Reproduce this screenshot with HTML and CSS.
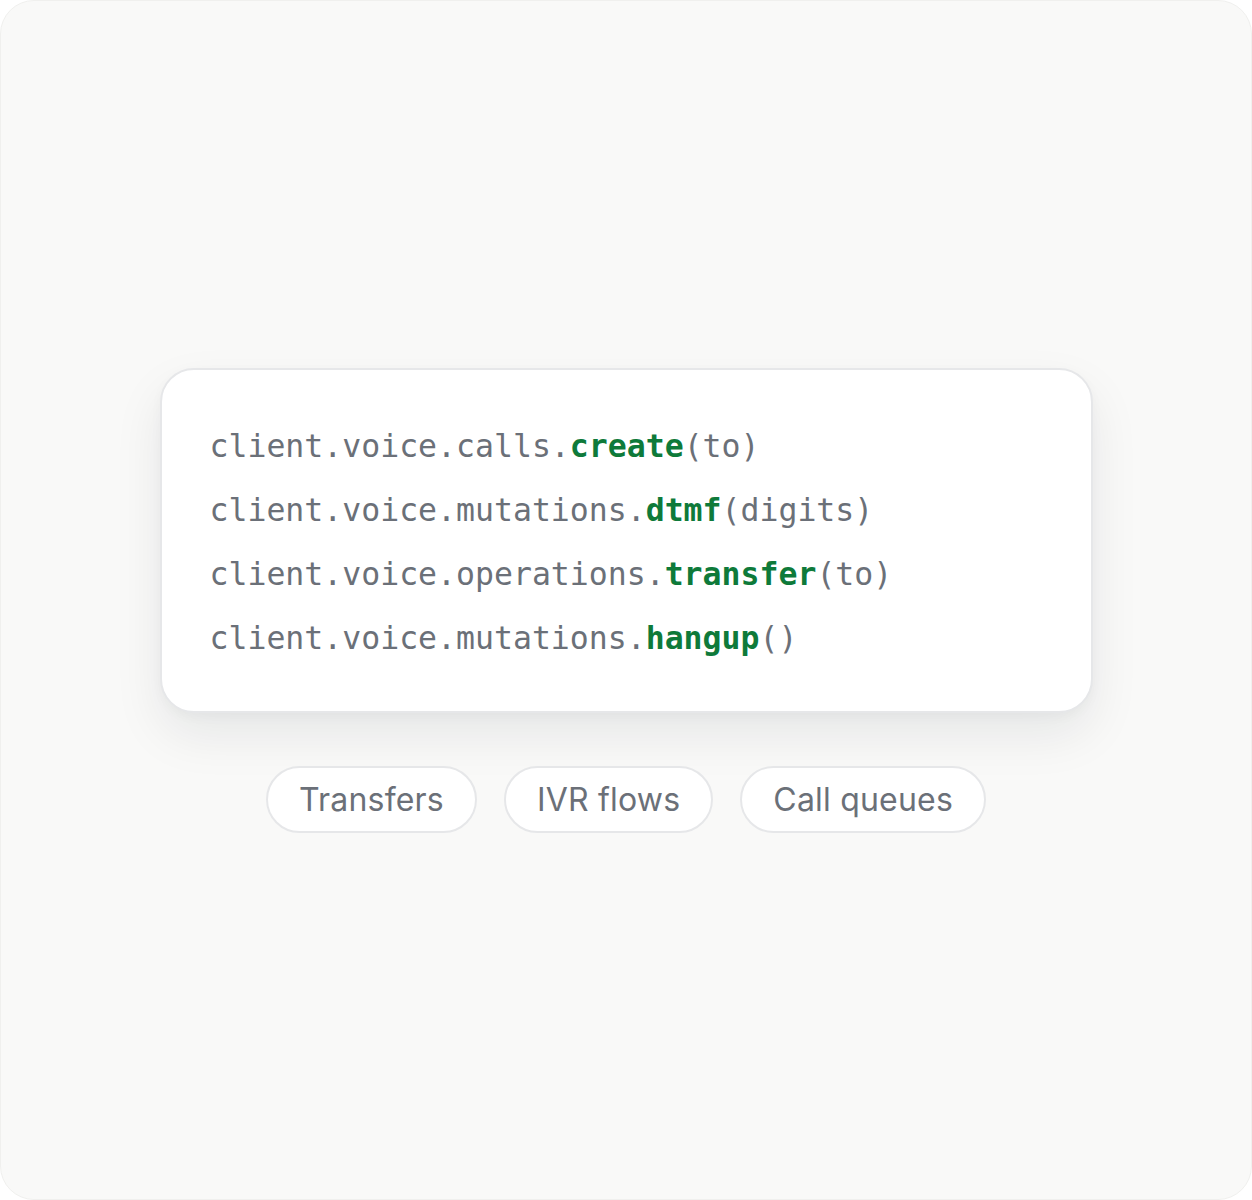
FILE: index.html
```html
<!DOCTYPE html>
<html lang="en">
<head>
<meta charset="utf-8">
<title>Voice API</title>
<link rel="stylesheet" href="styles.css">
</head>
<body>
<main class="frame">
  <div class="stack">
    <section class="code-card">
      <div class="line">client.voice.calls.<b class="fn">create</b>(to)</div>
      <div class="line">client.voice.mutations.<b class="fn">dtmf</b>(digits)</div>
      <div class="line">client.voice.operations.<b class="fn">transfer</b>(to)</div>
      <div class="line">client.voice.mutations.<b class="fn">hangup</b>()</div>
    </section>
    <ul class="tags">
      <li class="tag">Transfers</li>
      <li class="tag">IVR flows</li>
      <li class="tag">Call queues</li>
    </ul>
  </div>
</main>
</body>
</html>
```

FILE: styles.css
```css
html, body {
  margin: 0;
  padding: 0;
  background: #ffffff;
}

.frame {
  box-sizing: border-box;
  width: 1252px;
  height: 1200px;
  background: #f9f9f8;
  border: 1px solid #f0f0ee;
  border-radius: 34px;
  display: flex;
  align-items: center;
  justify-content: center;
}

.stack {
  display: flex;
  flex-direction: column;
  align-items: center;
  gap: 53px;
}

.code-card {
  box-sizing: border-box;
  width: 933px;
  background: #ffffff;
  border: 2px solid #e6e7e9;
  border-radius: 34px;
  padding: 44px 48px 41px;
  box-shadow: 0 22px 50px rgba(17, 24, 39, 0.08), 0 4px 12px rgba(17, 24, 39, 0.03);
  font-family: "DejaVu Sans Mono", "Liberation Mono", monospace;
  font-size: 31.5px;
  line-height: 64px;
  color: #6b7078;
}

.line {
  white-space: pre;
}

.fn {
  color: #0e7a3a;
  font-weight: 700;
}

.tags {
  list-style: none;
  margin: 0;
  padding: 0;
  display: flex;
  gap: 27px;
}

.tag {
  box-sizing: border-box;
  height: 67px;
  padding: 0 31px;
  display: flex;
  align-items: center;
  background: #ffffff;
  border: 2px solid #e6e7e9;
  border-radius: 999px;
  font-family: Inter, "Noto Sans", sans-serif;
  font-size: 32px;
  color: #6b7078;
  letter-spacing: 0.2px;
}
```
